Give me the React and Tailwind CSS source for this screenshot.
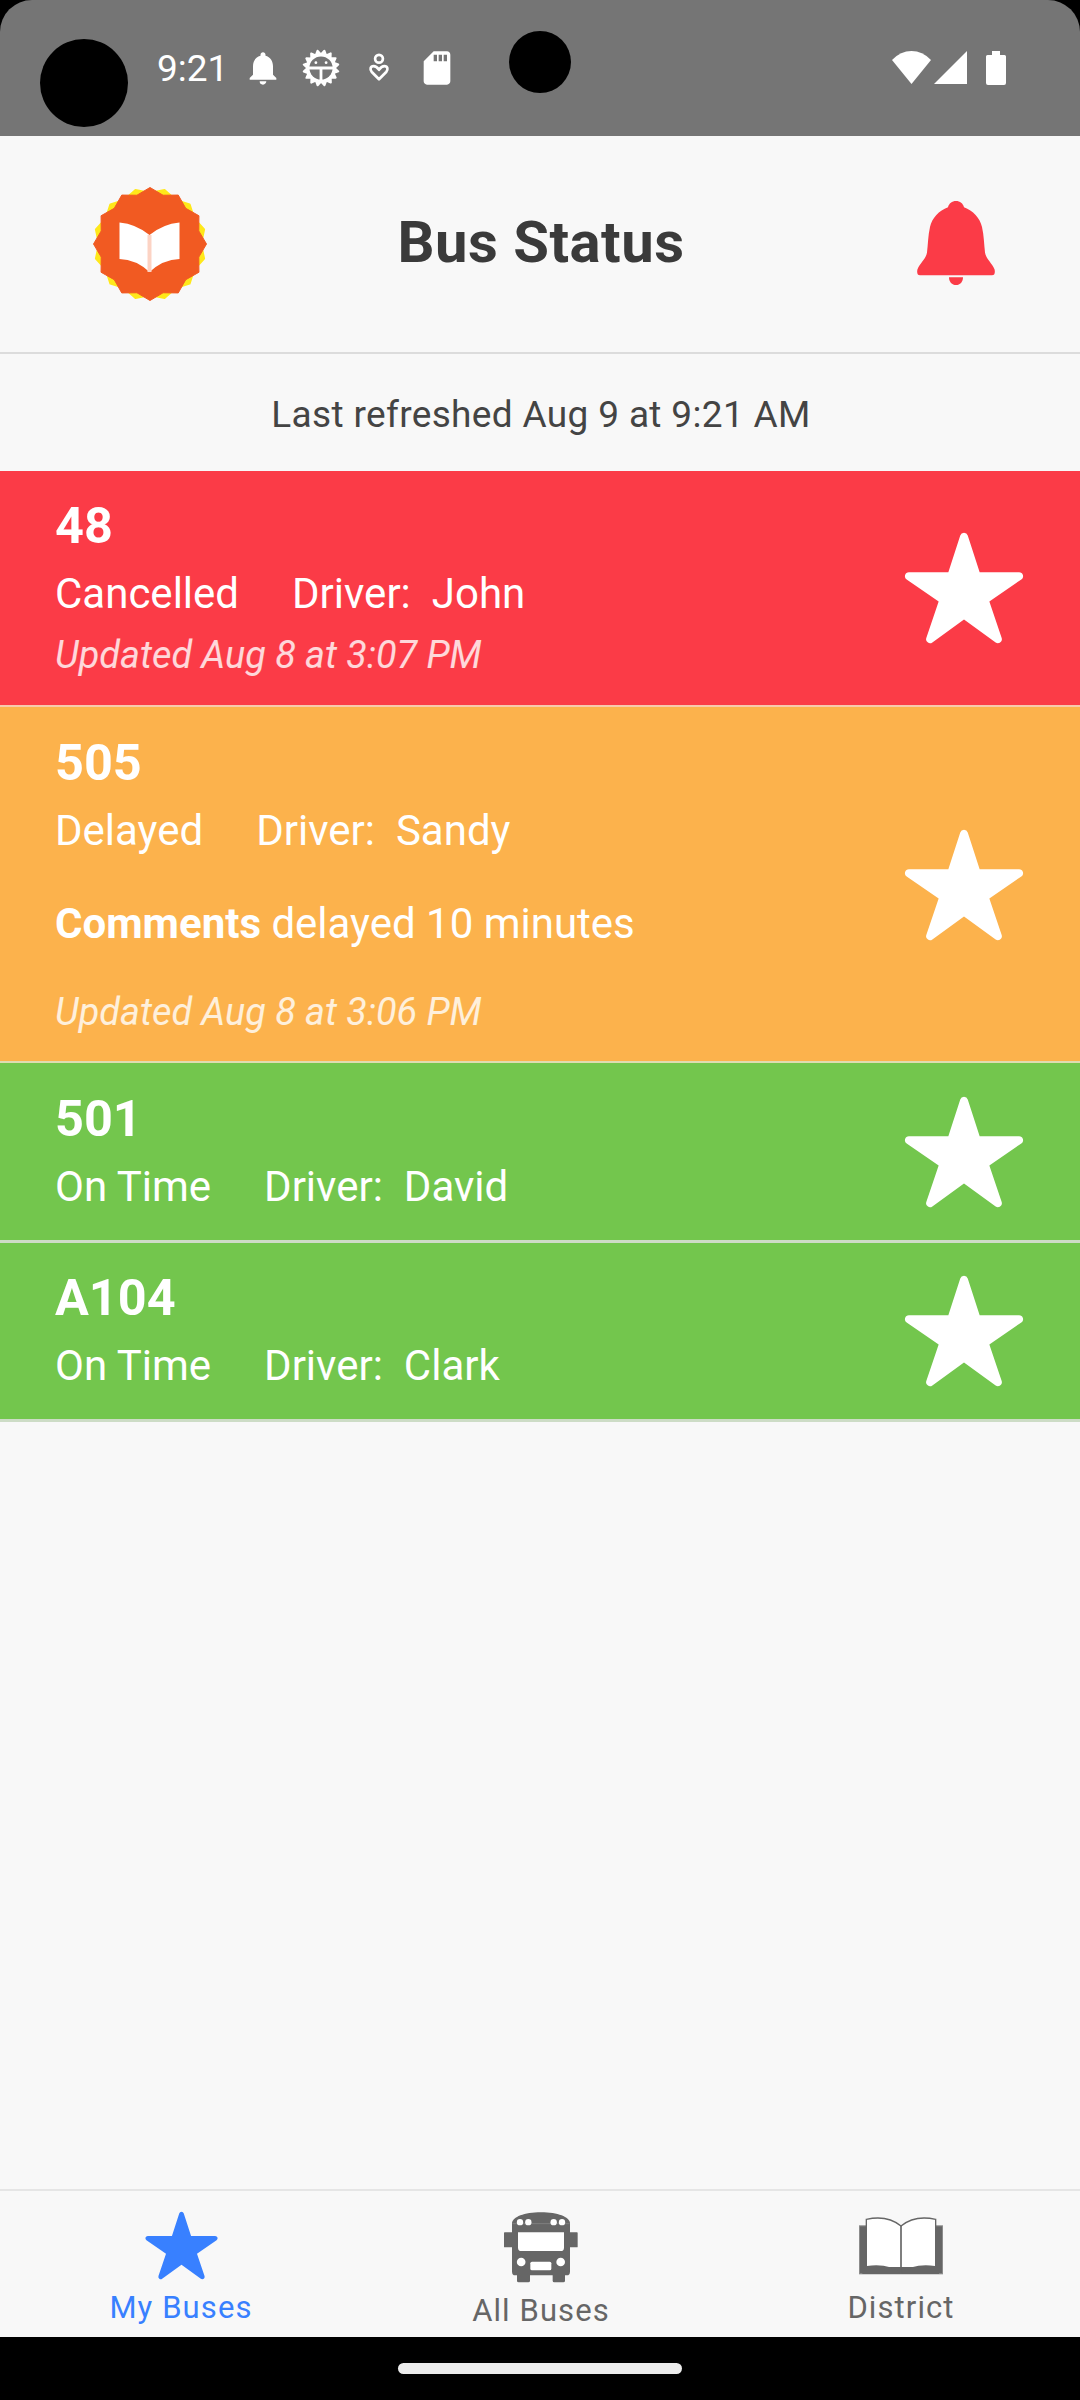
import { IoStar } from 'react-icons/io5';
import { MdNotifications, MdSdCard } from 'react-icons/md';

const buses = [
  {
    id: '48',
    status: 'Cancelled',
    driver: 'John',
    updated: 'Updated Aug 8 at 3:07 PM',
    className: 'bg-[#fb3b47] border-b-2 border-[#f8c9ac] pt-[25px] pb-4',
  },
  {
    id: '505',
    status: 'Delayed',
    driver: 'Sandy',
    comments: 'delayed 10 minutes',
    updated: 'Updated Aug 8 at 3:06 PM',
    className: 'bg-[#fcb24c] border-b-2 border-[#dfdcb0] pt-[26px] pb-[15px]',
  },
  {
    id: '501',
    status: 'On Time',
    driver: 'David',
    className: 'bg-[#73c64d] border-b-3 border-[#cddcc6] pt-[26px] pb-[15px]',
  },
  {
    id: 'A104',
    status: 'On Time',
    driver: 'Clark',
    className: 'bg-[#73c64d] border-b-3 border-[#cddcc6] pt-[25px] pb-[15px]',
  },
];

// Points of a star polygon, alternating between two radii
const starPoints = (count, outer, inner, offset) =>
  Array.from({ length: count * 2 }, (_, i) => {
    const r = i % 2 === 0 ? outer : inner;
    const a = ((i * 180) / count + offset) * (Math.PI / 180);
    return `${(r * Math.sin(a)).toFixed(2)},${(-r * Math.cos(a)).toFixed(2)}`;
  }).join(' ');

const GearFaceIcon = () => (
  <svg viewBox="-20 -20 40 40" className="w-10 h-10">
    <polygon points={starPoints(16, 17.6, 13.6, 11)} fill="#fff" stroke="#fff" strokeWidth="2" strokeLinejoin="round" />
    <circle r="11.6" fill="#757575" />
    <path d="M-13 0H13M0 0V13" stroke="#fff" strokeWidth="2.8" />
    <circle cx="-5.1" cy="-5.3" r="1.4" fill="#fff" />
    <circle cx="5.1" cy="-5.3" r="1.4" fill="#fff" />
  </svg>
);

const HeartPersonIcon = () => (
  <svg viewBox="0 0 24 32" className="w-6 h-8" fill="none" stroke="#fff" strokeWidth="2.7">
    <circle cx="12" cy="6.7" r="3.9" />
    <path d="M12 27.3 4.8 20C2.6 17.6 3.3 14.2 6.6 14.2c2.4 0 3.8 1.4 5.4 3.6 1.6-2.2 3-3.6 5.4-3.6 3.3 0 4 3.4 1.8 5.8z" strokeLinejoin="round" />
  </svg>
);

const Logo = () => (
  <svg viewBox="-58 -58 116 116" className="w-[116px] h-[116px]">
    <polygon points={starPoints(12, 56, 51, 15)} fill="#ffe81a" stroke="#ffe81a" strokeWidth="2" strokeLinejoin="round" />
    <polygon points={starPoints(12, 56.5, 50.5, 0)} fill="#f15a22" stroke="#f15a22" strokeWidth="1" strokeLinejoin="round" />
    <path d="M-30.5-21.5Q-14-20-.5-9Q13-20 29.5-21.5V15Q13 15.500-.5 28Q-14 15.500-30.500 15z" fill="#fff" />
    <path d="M-.5-9V28" stroke="#fcd3c4" strokeWidth="4" />
  </svg>
);

const AlertBell = () => (
  <svg viewBox="917 200 78 86" className="w-[78px] h-[86px]" fill="#fb3b47">
    <path d="M956 201C960 201 963 203.500 964 207.200C973 210.500 980 218 982 227C984 236 984 244 985 252.500C986 259 992 263 994.600 269.500C995.300 273 994.500 275.300 992 275.300H920C917.500 275.300 916.700 273 917.400 269.500C920 263 926 259 927 252.500C928 244 928 236 930 227C932 218 939 210.500 948 207.200C949 203.500 952 201 956 201z" />
    <path d="M949 277.200H963C963 282 960 285 956 285C952 285 949 282 949 277.200z" />
  </svg>
);

const BusIcon = () => (
  <svg viewBox="192 125 222 213" className="w-[74px] h-[71px]">
    <g fill="#666">
      <rect x="192" y="186" width="30" height="45" rx="2" />
      <rect x="384" y="186" width="29" height="45" rx="2" />
      <path d="M216 158C218 140 252 126 303 126C354 126 388 140 390 158V304Q390 315 380 315H226Q216 315 216 304z" />
      <path d="M231 305H270V331Q270 336 265 336H236Q231 336 231 331z" />
      <path d="M338 305H375V331Q375 336 370 336H343Q338 336 338 331z" />
    </g>
    <path d="M217 160H389" stroke="#8d8d8d" strokeWidth="2" />
    <g fill="#fff">
      <circle cx="240" cy="155.500" r="9.500" />
      <circle cx="265" cy="155.500" r="9.500" />
      <circle cx="341" cy="155.500" r="9.500" />
      <circle cx="366" cy="155.500" r="9.500" />
      <path d="M234 186H372V232Q372 242 362 242H244Q234 242 234 232z" />
      <circle cx="243.500" cy="275" r="13" />
      <circle cx="362" cy="275" r="13" />
      <rect x="271" y="274" width="63" height="26" rx="5" />
    </g>
  </svg>
);

const BookIcon = () => (
  <svg viewBox="240 140 252 174" className="w-[84px] h-[58px]">
    <rect x="241.500" y="166.500" width="249" height="144" fill="#666" stroke="#8c8c8c" strokeWidth="3" />
    <path d="M262 290V147Q325 133 366 167Q407 133 470 147V290" fill="#fff" stroke="#666" strokeWidth="4" />
    <path d="M264 287Q330 278 366 310Q402 278 468 287V300H480V311H250V300H264z" fill="#666" />
    <path d="M366 167V311" stroke="#666" strokeWidth="5" />
  </svg>
);

const StatusBar = () => (
  <div className="bg-black">
    <div className="relative h-[136px] bg-[#757575] rounded-t-[32px] flex justify-between pl-[157px] pr-[74px]">
      <div className="absolute left-[40px] top-[39px] w-[88px] h-[88px] rounded-full bg-black" />
      <div className="absolute left-[509px] top-[31px] w-[62px] h-[62px] rounded-full bg-black" />
      <div className="flex items-center h-10 mt-[48px] text-white">
        <span className="w-[86px] pt-0.5 text-[37px] leading-10">9:21</span>
        <MdNotifications className="w-10 h-10" />
        <span className="ml-[18px]"><GearFaceIcon /></span>
        <span className="ml-[26px]"><HeartPersonIcon /></span>
        <MdSdCard className="ml-[26px] w-10 h-10" />
      </div>
      <div className="flex items-start mt-[51px]">
        <svg viewBox="0 0 39 33" className="w-[39px] h-[33px]" fill="#fff">
          <path d="M0 9Q8.500 0 19.500 0T39 9L19.500 33z" />
        </svg>
        <svg viewBox="0 0 33 33" className="ml-[3px] w-[33px] h-[33px]" fill="#fff">
          <path d="M33 0V33H0z" />
        </svg>
        <svg viewBox="0 0 20 34" className="ml-[19px] w-5 h-[34px]" fill="#fff">
          <path d="M6 0H14V4H18.500Q20 4 20 5.500V32Q20 34 18 34H2Q0 34 0 32V5.500Q0 4 1.500 4H6z" />
        </svg>
      </div>
    </div>
  </div>
);

const BusRow = ({ bus }) => (
  <div className={`flex items-center justify-between pl-[55px] pr-[53px] text-white ${bus.className}`}>
    <div className="whitespace-nowrap">
      <div className="text-[50.4px] leading-[60px] font-bold">{bus.id}</div>
      <div className="flex text-[42px] leading-[76px]">
        <span>{bus.status}</span>
        <span className="ml-[53px]">Driver:</span>
        <span className="ml-[21px]">{bus.driver}</span>
      </div>
      {bus.comments && (
        <div className="mt-[25px] mb-[35px] text-[42px] leading-[60px]">
          <b>Comments</b> {bus.comments}
        </div>
      )}
      {bus.updated && (
        <div className="mb-[11px] text-[37.8px] leading-[46px] italic text-white/80">{bus.updated}</div>
      )}
    </div>
    <IoStar className="-mt-[10px] w-[126px] h-[126px]" />
  </div>
);

const Tab = ({ icon, label, className }) => (
  <div className={`flex-1 flex flex-col items-center pl-0.5 text-[31px] leading-[40px] tracking-[1.1px] ${className}`}>
    {icon}
    <span>{label}</span>
  </div>
);

const App = () => {
  return (
    <div className="w-[1080px] h-[2400px] flex flex-col bg-[#f8f8f8] font-['Roboto',sans-serif] overflow-hidden">
      <StatusBar />
      <header className="h-[218px] shrink-0 flex items-start justify-between border-b-2 border-[#dcdcdc]">
        <div className="w-[241px] pl-[92px] pt-[50px]"><Logo /></div>
        <h1 className="mt-[71px] text-[58px] leading-[70px] tracking-[0.5px] font-bold text-[#3a3a3a]">Bus Status</h1>
        <div className="w-[239px] pr-[85px] pt-[64px] flex justify-end"><AlertBell /></div>
      </header>
      <p className="h-[117px] pt-[36px] pl-0.5 text-center text-[37px] leading-[50px] tracking-[0.35px] text-[#444]">
        Last refreshed Aug 9 at 9:21 AM
      </p>
      <main className="flex-1">
        {buses.map((bus) => (
          <BusRow key={bus.id} bus={bus} />
        ))}
      </main>
      <nav className="h-[148px] shrink-0 flex border-t-2 border-[#e5e5e5]">
        <Tab icon={<IoStar className="mt-4 mb-1 w-[77px] h-[77px]" />} label="My Buses" className="text-[#3880ff]" />
        <Tab icon={<span className="mt-[21px] mb-[8px] h-[71px]"><BusIcon /></span>} label="All Buses" className="text-[#666]" />
        <Tab icon={<span className="mt-[26px] mb-[13px] h-[58px]"><BookIcon /></span>} label="District" className="text-[#666]" />
      </nav>
      <div className="h-[63px] shrink-0 bg-black flex justify-center pt-[26px]">
        <div className="w-[284px] h-[11px] rounded-full bg-[#ececec]" />
      </div>
    </div>
  );
};

export default App;
